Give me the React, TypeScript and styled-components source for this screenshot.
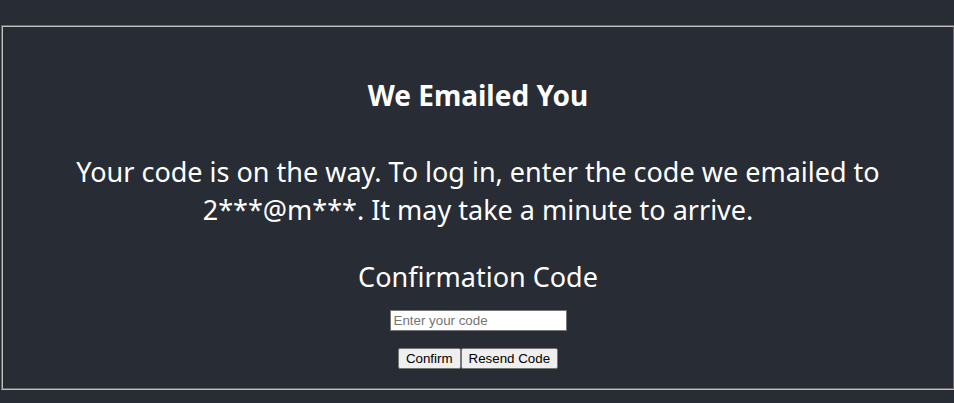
import React from 'react';
import styled, { createGlobalStyle } from 'styled-components';

const GlobalStyle = createGlobalStyle`
  body {
    margin: 0;
    overflow-x: hidden;
    background: #282c34;
    color: #fff;
    font-family: 'Noto Sans', 'Open Sans', sans-serif;
  }
`;

const Page = styled.main`
  margin: 0 -1px 0 1px;
  padding-top: 25px;
`;

const Panel = styled.fieldset`
  margin: 0;
  padding: 49px 48px 19px;
  border: 2px groove #c0c0c0;
  display: flex;
  flex-direction: column;
  align-items: center;
  text-align: center;
`;

const Title = styled.h3`
  margin: 0;
  font-size: 28px;
  line-height: 38px;
  font-weight: 700;
`;

const Message = styled.p`
  margin: 39px 0 29px;
  font-size: 27px;
  line-height: 38px;
`;

const Label = styled.label`
  font-size: 27px;
  line-height: 38px;
`;

const CodeInput = styled.input`
  box-sizing: border-box;
  width: 177px;
  height: 21px;
  margin: 14px 0 17px;
  padding: 1px 3px;
  border: 1px solid #767676;
  background: #fff;
  color: #000;
  font-family: 'Liberation Sans', Arial, sans-serif;

  &::placeholder {
    color: #757575;
  }
`;

const Actions = styled.div`
  display: flex;
`;

const Button = styled.button`
  height: 21px;
  padding: 1px 7px;
  border: 1px solid #767676;
  border-radius: 2px;
  background: #efefef;
  color: #000;
  font-family: 'Liberation Sans', Arial, sans-serif;
`;

export default function App() {
  return (
    <>
      <GlobalStyle />
      <Page>
        <form onSubmit={(event) => event.preventDefault()}>
          <Panel>
            <Title>We Emailed You</Title>
            <Message>
              Your code is on the way. To log in, enter the code we emailed to
              2***@m***. It may take a minute to arrive.
            </Message>
            <Label htmlFor="code">Confirmation Code</Label>
            <CodeInput id="code" name="code" placeholder="Enter your code" />
            <Actions>
              <Button type="submit">Confirm</Button>
              <Button type="button">Resend Code</Button>
            </Actions>
          </Panel>
        </form>
      </Page>
    </>
  );
}
